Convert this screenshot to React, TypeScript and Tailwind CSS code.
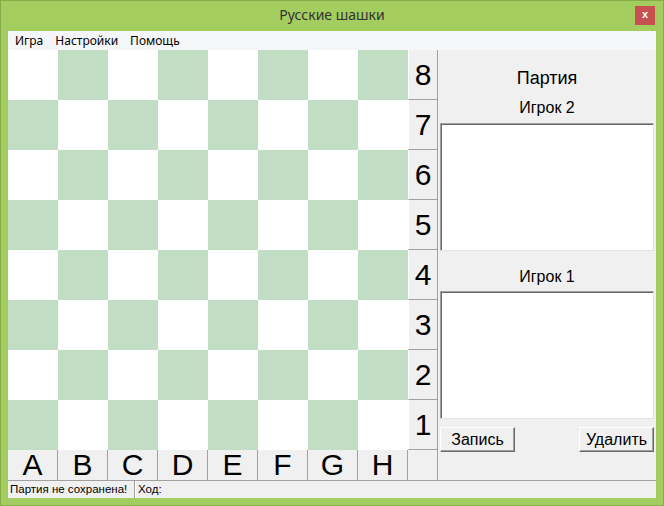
export default function App() {
  const files = ['A', 'B', 'C', 'D', 'E', 'F', 'G', 'H'];
  const ranks = [8, 7, 6, 5, 4, 3, 2, 1];
  const sans = { fontFamily: '"Liberation Sans", Arial, sans-serif' };
  const ui = { fontFamily: '"Noto Sans", "Open Sans", sans-serif' };
  return (
    <div className="w-[664px] h-[506px] bg-[#a4cd5f] border border-[#86ac4a] flex flex-col overflow-hidden">
      <div className="h-[30px] relative flex items-center justify-center">
        <span className="text-[14px] text-[#333333] leading-none pb-[2px]" style={ui}>Русские шашки</span>
        <div className="absolute right-[8px] top-[5px] w-[20px] h-[19px] bg-[#c75050] flex items-center justify-center">
          <span className="text-white text-[11px] font-bold leading-none pb-[2px]" style={sans}>x</span>
        </div>
      </div>
      <div className="mx-[7px] w-[648px] h-[467px] flex flex-col bg-[#f0f0f0]">
        <div className="h-[19px] bg-[#f5f6f7] flex items-center pl-[7px] gap-[12px] text-[12px] text-black" style={ui}>
          <span>Игра</span>
          <span>Настройки</span>
          <span>Помощь</span>
        </div>
        <div className="h-[430px] flex">
          <div className="w-[400px] flex flex-col">
            <div className="grid grid-cols-8 w-[400px] h-[400px]">
              {ranks.map((r, ri) =>
                files.map((f, fi) => (
                  <div
                    key={f + r}
                    className={(ri + fi) % 2 === 1 ? 'w-[50px] h-[50px] bg-[#c1ddc3]' : 'w-[50px] h-[50px] bg-white'}
                  />
                ))
              )}
            </div>
            <div className="h-[30px] flex">
              {files.map((f) => (
                <div
                  key={f}
                  className="w-[50px] h-[30px] border-r border-[#a0a0a0] flex items-center justify-center text-[30px] leading-none text-black"
                  style={sans}
                >
                  {f}
                </div>
              ))}
            </div>
          </div>
          <div className="w-[30px] flex flex-col border-r border-[#a0a0a0]">
            {ranks.map((r) => (
              <div
                key={r}
                className="h-[50px] border-b border-[#a0a0a0] border-l border-l-white flex items-center justify-center text-[30px] leading-none text-black"
                style={sans}
              >
                {r}
              </div>
            ))}
            <div className="h-[30px]" />
          </div>
          <div className="flex-1 flex flex-col px-[2px]" style={sans}>
            <div className="mt-[17px] h-[22px] leading-[22px] text-center text-[18px] text-black">Партия</div>
            <div className="mt-[9px] h-[20px] leading-[20px] text-center text-[16px] text-black">Игрок 2</div>
            <div className="mt-[5px] h-[128px] bg-white border border-t-[#a0a0a0] border-l-[#a0a0a0] border-r-[#e3e3e3] border-b-[#e3e3e3] shadow-[inset_1px_1px_0_#696969]" />
            <div className="mt-[16px] h-[20px] leading-[20px] text-center text-[16px] text-black">Игрок 1</div>
            <div className="mt-[4px] h-[128px] bg-white border border-t-[#a0a0a0] border-l-[#a0a0a0] border-r-[#e3e3e3] border-b-[#e3e3e3] shadow-[inset_1px_1px_0_#696969]" />
            <div className="mt-[8px] h-[25px] flex justify-between">
              <div className="w-[75px] h-[25px] bg-[#f0f0f0] border border-t-white border-l-white border-r-[#696969] border-b-[#696969] shadow-[inset_-1px_-1px_0_#a0a0a0] flex items-center justify-center text-[16px] text-black leading-none">
                Запись
              </div>
              <div className="w-[75px] h-[25px] bg-[#f0f0f0] border border-t-white border-l-white border-r-[#696969] border-b-[#696969] shadow-[inset_-1px_-1px_0_#a0a0a0] flex items-center justify-center text-[16px] text-black leading-none">
                Удалить
              </div>
            </div>
          </div>
        </div>
        <div className="h-[18px] border-t border-[#a0a0a0] flex text-[11.5px] text-black" style={sans}>
          <div className="w-[127px] h-full border-r border-[#a0a0a0] pl-[2px] flex items-center leading-none">
            Партия не сохранена!
          </div>
          <div className="flex-1 h-full border-l border-white pl-[2px] flex items-center leading-none">Ход:</div>
        </div>
      </div>
    </div>
  );
}
